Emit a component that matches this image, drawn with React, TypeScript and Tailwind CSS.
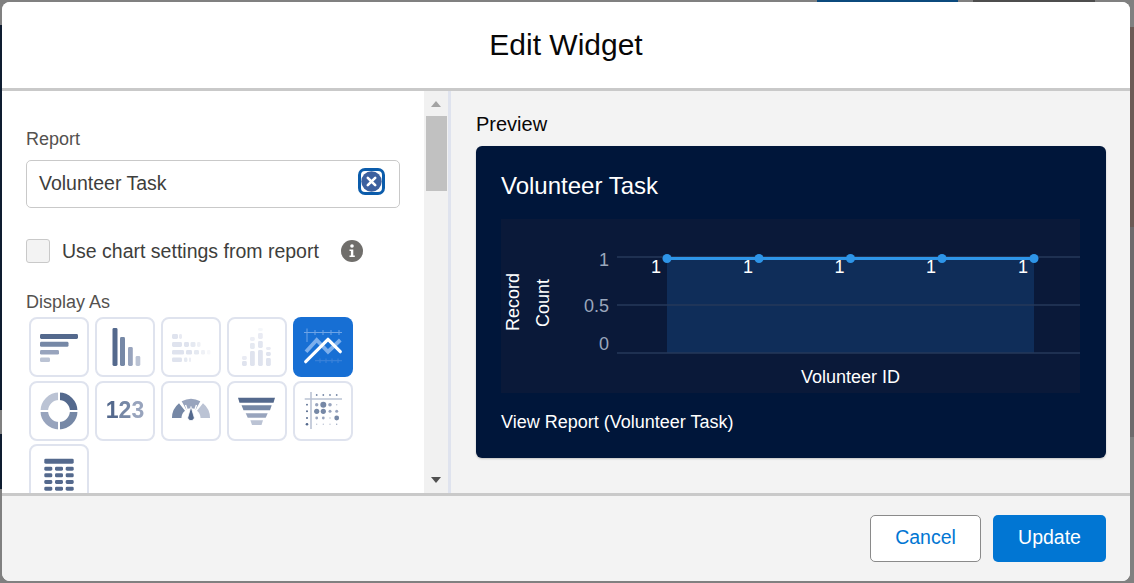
import React from "react";

const C1 = "#54698d", C2 = "#7688a6", C3 = "#98a4bd", C4 = "#bbc3d4";

function Tile({ active, children }: { active?: boolean; children: React.ReactNode }) {
  return (
    <div className={active ? "w-[60px] h-[60px] rounded-[8px] bg-[#176fd4] flex items-center justify-center" : "w-[60px] h-[60px] rounded-[8px] border-2 border-[#dfe3ee] bg-white flex items-center justify-center"}>
      {children}
    </div>
  );
}

function Ico({ children }: { children: React.ReactNode }) {
  return <svg width="60" height="60" viewBox="0 0 60 60" className="shrink-0 blur-[0.35px]">{children}</svg>;
}

const R = ({ x, y, w, h, f, o }: { x: number; y: number; w: number; h: number; f: string; o?: number }) => (
  <rect x={x} y={y} width={w} height={h} rx={1.4} fill={f} opacity={o} />
);

function BarIcon() {
  return <Ico>
    <R x={11} y={17} w={38} h={5} f={C1} />
    <R x={11} y={24.8} w={28.5} h={5} f={C2} />
    <R x={11} y={33} w={19} h={4.6} f={C3} />
    <R x={11} y={40.5} w={10} h={4.6} f={C4} />
  </Ico>;
}
function ColIcon() {
  return <Ico>
    <R x={17.5} y={11} w={5} h={38} f={C1} />
    <R x={25} y={20} w={5} h={29} f={C2} />
    <R x={33} y={30} w={4.8} h={19} f={C3} />
    <R x={40.6} y={39} w={4.7} h={10} f={C4} />
  </Ico>;
}
function HeatBarIcon() {
  const f = "#dfe3ee";
  return <Ico>
    <R x={11} y={17} w={6} h={5} f={f} /><R x={18} y={17} w={3} h={5} f={f} o={0.7} />
    <R x={11} y={25} w={10} h={5} f={f} /><R x={23} y={25} w={5} h={5} f={f} /><R x={29.5} y={25} w={5} h={5} f={f} o={0.8} /><R x={36} y={25} w={3.5} h={5} f={f} o={0.5} />
    <R x={11} y={33} w={12} h={4.6} f={f} /><R x={25} y={33} w={6} h={4.6} f={f} /><R x={33} y={33} w={5} h={4.6} f={f} o={0.8} /><R x={40} y={33} w={4} h={4.6} f={f} o={0.5} /><R x={46} y={33} w={3.4} h={4.6} f={f} o={0.25} />
    <R x={11} y={40.5} w={10} h={4.6} f={f} /><R x={23} y={40.5} w={3.4} h={4.6} f={f} o={0.8} /><R x={28} y={40.5} w={2} h={4.6} f={f} o={0.6} />
  </Ico>;
}
function StackColIcon() {
  const f = "#dfe3ee";
  return <Ico>
    <R x={15} y={39} w={4.8} h={4} f={f} o={0.7} /><R x={15} y={44} w={4.8} h={5} f={f} />
    <R x={23} y={20} w={4.8} h={4} f={f} o={0.6} /><R x={23} y={26} w={4.8} h={6} f={f} o={0.8} /><R x={23} y={34} w={4.8} h={15} f={f} />
    <R x={31} y={11} w={4.8} h={3} f={f} o={0.3} /><R x={31} y={16} w={4.8} h={6} f={f} o={0.7} /><R x={31} y={24} w={4.8} h={7} f={f} o={0.9} /><R x={31} y={33} w={4.8} h={16} f={f} />
    <R x={39} y={30} w={4.8} h={3} f={f} o={0.7} /><R x={39} y={35} w={4.8} h={4} f={f} /><R x={39} y={41} w={4.8} h={8} f={f} />
  </Ico>;
}
function LineIcon() {
  return <Ico>
    <g stroke="#6ea4e6" strokeWidth="1" fill="none">
      <path d="M11 15.5H49M14 11.5V25" />
      {[22, 30, 38, 46].map((x) => <path key={x} d={`M${x} 13V18`} />)}
    </g>
    <g stroke="#3f84d9" strokeWidth="1" fill="none">
      <path d="M22 43.7H49" />
      {[27, 33, 39, 45].map((x) => <path key={x} d={`M${x} 41.5V46`} />)}
    </g>
    <path d="M13 34.7L23.7 23L35 34.7L47.3 23" fill="none" stroke="#7dafec" strokeWidth="3.8" />
    <path d="M12.7 44.7L35 22.3L47.3 34.7" fill="none" stroke="#fff" strokeWidth="3.2" strokeLinecap="round" strokeLinejoin="round" />
  </Ico>;
}
function DonutIcon() {
  return <Ico>
    <g fill="none" strokeWidth="7.6">
      <path d="M30 15.3A14.7 14.7 0 0 1 44.7 30" stroke={C1} />
      <path d="M44.7 30A14.7 14.7 0 0 1 30 44.7" stroke={C2} />
      <path d="M30 44.7A14.7 14.7 0 0 1 15.3 30" stroke={C3} />
      <path d="M15.3 30A14.7 14.7 0 0 1 30 15.3" stroke={C4} />
    </g>
    <path d="M30 9V51M9 30H51" stroke="#fff" strokeWidth="2" />
  </Ico>;
}
function GaugeIcon() {
  return <Ico>
    <g fill="none" strokeWidth="9.5">
      <path d="M15.7 37A14.3 14.3 0 0 1 21 26" stroke={C2} />
      <path d="M23 24.5A14.3 14.3 0 0 1 37 24.5" stroke={C3} />
      <path d="M39 26A14.3 14.3 0 0 1 44.3 37" stroke={C4} />
    </g>
    <path d="M30 39L24.5 24M30 39L35.5 24" stroke="#fff" strokeWidth="1.4" />
    <path d="M30 25.5L33.4 37A3.5 3.5 0 0 1 26.6 37Z" fill={C1} stroke="#fff" strokeWidth="0.8" />
  </Ico>;
}
function FunnelIcon() {
  return <Ico>
    <path d="M11 16.7H48L46.5 21.7H12.5Z" fill={C1} />
    <path d="M14.5 24.3H44.7L43 29.3H16.5Z" fill={C2} />
    <path d="M18.7 32.3H40.7L38.7 36.7H20.7Z" fill={C3} />
    <path d="M23.4 39.3H36L34.5 44H25Z" fill={C4} />
  </Ico>;
}
function DotsIcon() {
  const cols = [14, 23.7, 30.3, 37, 43.7];
  const rows: [number, [number, string][]][] = [
    [14, [[0, C1], [0.9, C2], [0.9, C2], [0.9, C2], [0.9, C2]]],
    [23.7, [[0.9, C1], [1.7, C3], [3, C2], [1.8, C3], [0.7, C4]]],
    [30.3, [[1, C1], [2.6, C2], [2.6, C2], [1.5, C3], [1.5, C3]]],
    [37, [[1, C1], [1.4, C3], [1.4, C3], [0.8, C4], [2.4, C2]]],
    [43.3, [[1.3, C1], [0.7, C4], [0.7, C4], [0.7, C4], [0.7, C3]]],
  ];
  return <Ico>
    <path d="M18 11V48M11.7 18H49" stroke={C4} strokeWidth="1.6" />
    {rows.map(([y, ds]) => ds.map(([r, f], i) => r ? <circle key={`${y}-${i}`} cx={cols[i]} cy={y} r={r} fill={f} /> : null))}
  </Ico>;
}
function TableIcon() {
  const ys = [22.7, 29.3, 36, 42.7];
  const xs = [15.3, 26, 36.7];
  return <Ico>
    <R x={15.3} y={14.7} w={29.4} h={5} f={C1} />
    {ys.map((y) => xs.map((x) => <R key={`${x}-${y}`} x={x} y={y} w={8} h={4} f={C1} />))}
  </Ico>;
}

function Chart() {
  const pts = [166, 258, 349.5, 441, 533];
  return (
    <svg width="579" height="174" viewBox="0 0 579 174" className="block bg-[#0a1939]">
      <rect x="166" y="39" width="367" height="95" fill="#0f2d59" />
      <g stroke="#26395a" strokeWidth="1.4">
        <path d="M116 38H579M116 86H579M116 134H579" />
      </g>
      <path d="M166 39.5H533" stroke="#2e95e8" strokeWidth="2.8" />
      {pts.map((x) => <circle key={x} cx={x} cy="39.5" r="4.5" fill="#2e95e8" />)}
      {pts.map((x) => <text key={x} x={x - 6} y="54" textAnchor="end" fill="#fff" fontSize="18">1</text>)}
      <g fill="#9aa7bc" fontSize="18" textAnchor="end">
        <text x="108" y="47">1</text>
        <text x="108" y="93">0.5</text>
        <text x="108" y="131">0</text>
      </g>
      <g fill="#fff" fontSize="18" textAnchor="middle">
        <text transform="translate(18 83) rotate(-90)">Record</text>
        <text transform="translate(48 84) rotate(-90)">Count</text>
        <text x="349.5" y="164">Volunteer ID</text>
      </g>
    </svg>
  );
}

export default function App() {
  return (
    <div className="relative w-[1134px] h-[583px] overflow-hidden bg-[#808080] font-['Liberation_Sans',Arial,sans-serif] pl-[2px] pt-[2px] pr-[4px] pb-[2px]">
      <div className="absolute left-0 top-[25px] w-[2px] h-[385px] bg-[#0e1c30]" />
      <div className="absolute left-0 top-[434px] w-[2px] h-[55px] bg-[#0e1c30]" />
      <div className="absolute right-0 top-[27px] w-[4px] h-[200px] bg-[#6c5a55]" />
      <div className="absolute right-0 top-[227px] w-[4px] h-[210px] bg-[#6e6a6c]" />
      <div className="absolute left-[817px] top-0 w-[141px] h-[2px] bg-[#0b4a7d]" />
      <div className="absolute left-[973px] top-0 w-[122px] h-[2px] bg-[#4d4d4d]" />

      <div className="relative h-[579px] rounded-[8px] overflow-hidden bg-white flex flex-col">
        <header className="h-[89px] shrink-0 border-b-[3px] border-[#c9c9c9] flex items-center justify-center pb-[1px] bg-white">
          <h1 className="text-[30px] text-[#080707] leading-none">Edit Widget</h1>
        </header>

        <div className="flex-1 min-h-0 flex">
          <div className="w-[422px] shrink-0 bg-white overflow-hidden pl-[24px] pt-[38px] pr-[24px]">
            <div className="text-[18px] leading-[20px] text-[#54514f]">Report</div>
            <div className="mt-[11px] h-[48px] w-[374px] rounded-[5px] border border-[#c9c9c9] flex items-center justify-between pl-[12px] pr-[14px] pb-[5px]">
              <span className="text-[19.5px] text-[#3e3e3c] mt-[5px]">Volunteer Task</span>
              <span className="w-[27px] h-[27px] rounded-[7px] border-[3px] border-[#0b5cab] bg-white flex items-center justify-center">
                <svg width="21" height="21" viewBox="0 0 21 21">
                  <circle cx="10.5" cy="10.5" r="10.2" fill="#3c609f" />
                  <path d="M6.8 6.8L14.2 14.2M14.2 6.8L6.8 14.2" stroke="#fff" strokeWidth="2.6" strokeLinecap="round" />
                </svg>
              </span>
            </div>
            <div className="mt-[31px] flex items-center h-[24px]">
              <span className="w-[24px] h-[24px] rounded-[3px] border border-[#c9c9c9] bg-[#f3f3f3]" />
              <span className="ml-[12px] text-[19.5px] text-[#3e3e3c] mt-[2px]">Use chart settings from report</span>
              <span className="ml-[22px] w-[22px] h-[22px] rounded-full bg-[#706e6b] flex items-center justify-center text-white">
                <svg width="10" height="14" viewBox="0 0 10 14">
                  <circle cx="5" cy="2" r="1.8" fill="#fff" />
                  <path d="M2.5 5.5H6.3V11.5H7.8V13H2.5V11.5H3.9V7H2.5Z" fill="#fff" />
                </svg>
              </span>
            </div>
            <div className="mt-[29px] text-[18px] leading-[20px] text-[#54514f]">Display As</div>
            <div className="mt-[5px] ml-[3px] grid grid-cols-[repeat(5,60px)] gap-x-[6px] gap-y-[3.5px]">
              <Tile><BarIcon /></Tile>
              <Tile><ColIcon /></Tile>
              <Tile><HeatBarIcon /></Tile>
              <Tile><StackColIcon /></Tile>
              <Tile active><LineIcon /></Tile>
              <Tile><DonutIcon /></Tile>
              <Tile>
                <span className="text-[23px] font-bold leading-none blur-[0.35px]">
                  <span className="text-[#54698d]">1</span>
                  <span className="text-[#7688a6]">2</span>
                  <span className="text-[#98a4bd]">3</span>
                </span>
              </Tile>
              <Tile><GaugeIcon /></Tile>
              <Tile><FunnelIcon /></Tile>
              <Tile><DotsIcon /></Tile>
              <Tile><TableIcon /></Tile>
            </div>
          </div>

          <div className="w-[24px] shrink-0 bg-[#f1f1f1] flex flex-col items-center">
            <svg width="14" height="8" viewBox="0 0 14 8" className="mt-[9px] shrink-0"><path d="M7 1L12 7H2Z" fill="#a3a3a3" /></svg>
            <div className="mt-[8px] w-[21px] h-[75px] bg-[#c1c1c1]" />
            <div className="flex-1" />
            <svg width="14" height="8" viewBox="0 0 14 8" className="mb-[9px] shrink-0"><path d="M2 1H12L7 7Z" fill="#505050" /></svg>
          </div>
          <div className="w-[3px] shrink-0 bg-[#dfe3ee]" />

          <div className="flex-1 min-w-0 bg-[#f3f3f3] pl-[25px] pt-[21px]">
            <div className="text-[20px] leading-[24px] text-[#080707]">Preview</div>
            <div className="mt-[10px] w-[630px] h-[312px] rounded-[6px] bg-[#00163a] shadow-[0_1px_2px_rgba(0,0,0,0.2)] pl-[25px] pr-[26px] pt-[26px]">
              <div className="text-[24px] leading-[28px] text-white">Volunteer Task</div>
              <div className="mt-[19px]"><Chart /></div>
              <div className="mt-[18px] text-[18px] leading-[22px] text-white">View Report (Volunteer Task)</div>
            </div>
          </div>
        </div>

        <footer className="h-[88px] shrink-0 border-t-[3px] border-[#c9c9c9] bg-[#f3f3f3] flex items-center justify-end gap-[12px] pr-[24px] pb-[1px]">
          <button className="w-[111px] h-[47px] rounded-[5px] border border-[#8a8a8a] bg-white text-[19.5px] text-[#0176d3]">Cancel</button>
          <button className="w-[113px] h-[47px] rounded-[5px] bg-[#0176d3] text-[19.5px] text-white">Update</button>
        </footer>
      </div>
    </div>
  );
}
